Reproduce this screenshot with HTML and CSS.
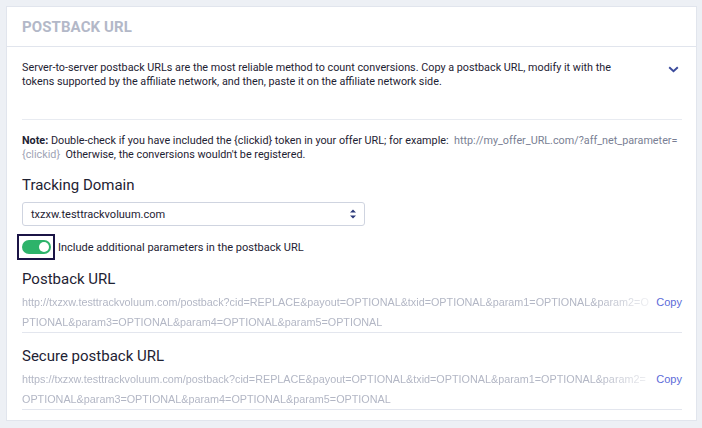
FILE: index.html
```html
<!DOCTYPE html>
<html>
<head>
<meta charset="utf-8">
<link rel="stylesheet" href="styles.css">
</head>
<body>
<div class="card">
  <div class="card-header">POSTBACK URL</div>
  <div class="card-body">
    <div class="intro">
      <p class="intro-text">Server-to-server postback URLs are the most reliable method to count conversions. Copy a postback URL, modify it with the tokens supported by the affiliate network, and then, paste it on the affiliate network side.</p>
      <svg class="chevron" width="11" height="7" viewBox="0 0 11 7"><path d="M1.2 1.2 L5.5 5.3 L9.8 1.2" fill="none" stroke="#3b4b9c" stroke-width="1.9"/></svg>
    </div>
    <div class="rule"></div>
    <p class="note"><b>Note:</b> Double-check if you have included the {clickid} token in your offer URL; for example: <span class="ex">&nbsp;http://my_offer_URL.com/?aff_net_parameter=</span> <span class="muted">{clickid}</span>&nbsp; Otherwise, the conversions wouldn't be registered.</p>
    <div class="label">Tracking Domain</div>
    <div class="select">
      <span>txzxw.testtrackvoluum.com</span>
      <svg width="8" height="12" viewBox="0 0 8 12"><path d="M4 1.5 L7 4.5 H1 Z M4 10.5 L1 7.5 H7 Z" fill="#2c3a7a"/></svg>
    </div>
    <div class="toggle-row">
      <div class="focus-box"><div class="toggle"><div class="knob"></div></div></div>
      <span class="toggle-label">Include additional parameters in the postback URL</span>
    </div>
    <div class="label label-url">Postback URL</div>
    <div class="url-row">
      <div class="url">http://txzxw.testtrackvoluum.com/postback?cid=REPLACE&amp;payout=OPTIONAL&amp;txid=OPTIONAL&amp;param1=OPTIONAL&amp;param2=OPTIONAL&amp;param3=OPTIONAL&amp;param4=OPTIONAL&amp;param5=OPTIONAL</div>
      <a class="copy">Copy</a>
    </div>
    <div class="label label-url second">Secure postback URL</div>
    <div class="url-row">
      <div class="url">https://txzxw.testtrackvoluum.com/postback?cid=REPLACE&amp;payout=OPTIONAL&amp;txid=OPTIONAL&amp;param1=OPTIONAL&amp;param2=OPTIONAL&amp;param3=OPTIONAL&amp;param4=OPTIONAL&amp;param5=OPTIONAL</div>
      <a class="copy">Copy</a>
    </div>
  </div>
</div>
</body>
</html>
```
FILE: styles.css
```css
html, body { margin: 0; padding: 0; }
body {
  background: #edf0f5;
  padding: 6px 5px 7px 6px;
  font-family: Roboto, "Liberation Sans", sans-serif;
  color: #1e2233;
}
.card {
  background: #fff;
  border: 1px solid #e1e5ed;
  height: 415px;
  box-sizing: border-box;
}
.card-header {
  height: 39px;
  border-bottom: 1px solid #e1e5ed;
  padding: 0 15px;
  display: flex;
  align-items: center;
  font-size: 15px;
  font-weight: 700;
  color: #b3b8c8;
  letter-spacing: 0.1px;
}
.card-body { padding: 0 14px 0 15px; }
.intro {
  display: flex;
  justify-content: space-between;
  padding-top: 14px;
}
.intro-text {
  margin: 0;
  font-size: 10.8px;
  line-height: 14px;
  width: 600px;
}
.chevron { margin: 5px 3px 0 0; }
.rule {
  height: 1px;
  background: #e8ebf1;
  margin: 30px 0 0 0;
}
.note {
  margin: 14px 0 0 0;
  font-size: 10.8px;
  line-height: 14px;
}
.note b { font-weight: 700; }
.note .ex { color: #7a7f94; white-space: nowrap; }
.note .muted { color: #9ea3b5; }
.label {
  font-size: 15px;
  margin-top: 14px;
  line-height: 18px;
}
.select {
  margin-top: 8px;
  width: 343px;
  height: 24px;
  box-sizing: border-box;
  border: 1px solid #cfd4e0;
  border-radius: 3px;
  display: flex;
  align-items: center;
  justify-content: space-between;
  padding: 0 7px 0 8px;
  font-size: 11px;
}
.toggle-row {
  display: flex;
  align-items: center;
  margin-top: 8px;
  margin-left: -5px;
}
.focus-box {
  width: 38px;
  height: 26px;
  box-sizing: border-box;
  border: 2px solid #1b1446;
  display: flex;
  align-items: center;
  justify-content: center;
}
.toggle {
  width: 29px;
  height: 14px;
  border-radius: 7px;
  background: #2db36a;
  position: relative;
}
.knob {
  position: absolute;
  right: 2px;
  top: 2px;
  width: 10px;
  height: 10px;
  border-radius: 50%;
  background: #fff;
}
.toggle-label {
  font-size: 11px;
  margin-left: 3px;
}
.label-url { margin-top: 10px; }
.label-url.second { margin-top: 14px; }
.url-row {
  display: flex;
  justify-content: space-between;
  align-items: flex-start;
  border-bottom: 1px solid #e3e6ee;
  margin-top: 4px;
}
.url {
  width: 630px;
  font-family: "Liberation Sans", Arial, sans-serif;
  font-size: 10.8px;
  line-height: 20px;
  color: #b3b7c5;
  word-break: break-all;
  -webkit-mask-image: linear-gradient(to right, #000 575px, rgba(0,0,0,0.15) 630px);
  mask-image: linear-gradient(to right, #000 575px, rgba(0,0,0,0.15) 630px);
}
.copy {
  font-family: "Liberation Sans", Arial, sans-serif;
  font-size: 11px;
  line-height: 20px;
  color: #5d6bd9;
}
```
